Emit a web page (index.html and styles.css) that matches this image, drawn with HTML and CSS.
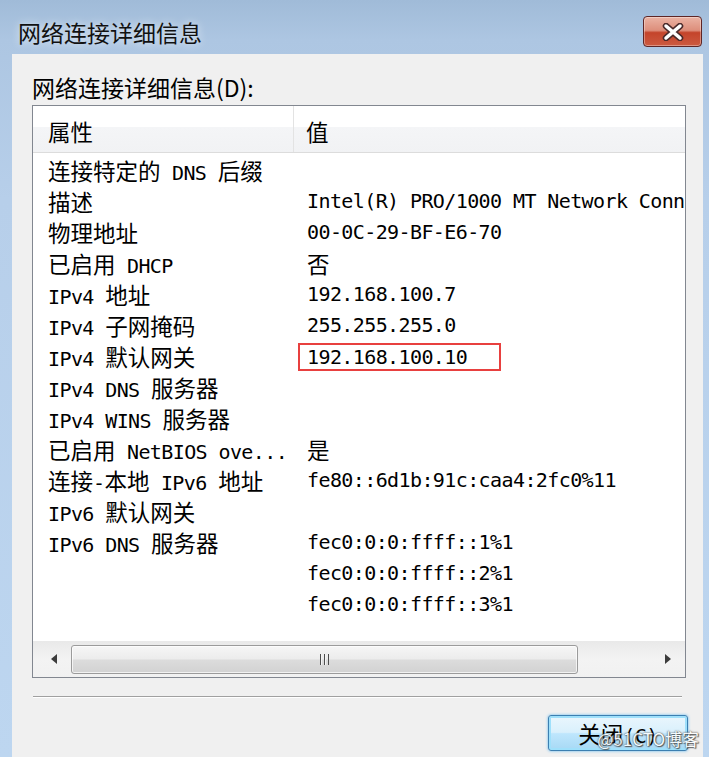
FILE: index.html
```html
<!DOCTYPE html>
<html lang="zh-CN">
<head>
    <meta charset="UTF-8">
    <meta name="viewport" content="width=device-width, initial-scale=1.0">
    <title>网络连接详细信息</title>
    <link rel="stylesheet" href="styles.css">
</head>
<body>
    <div class="window">
        <div class="titlebar">
            <span class="title">网络连接详细信息</span>
            <button class="close-btn" aria-label="关闭">
                <svg width="26" height="18" viewBox="0 0 26 18">
                    <path d="M6 3 L20 15 M20 3 L6 15" stroke="#4a2a2a" stroke-width="6.5" stroke-linecap="round"/>
                    <path d="M6 3 L20 15 M20 3 L6 15" stroke="#ffffff" stroke-width="3.5" stroke-linecap="round"/>
                </svg>
            </button>
        </div>

        <div class="client">
            <div class="label">网络连接详细信息(D):</div>

            <div class="listview">
                <div class="lv-header">
                    <div class="col-k">属性</div>
                    <div class="col-v">值</div>
                </div>

                <div class="lv-body">
                    <div class="row"><span class="k">连接特定的<span class="m"> DNS </span>后缀</span><span class="v"></span></div>
                    <div class="row"><span class="k">描述</span><span class="v">Intel(R) PRO/1000 MT Network Connection</span></div>
                    <div class="row"><span class="k">物理地址</span><span class="v">00-0C-29-BF-E6-70</span></div>
                    <div class="row"><span class="k">已启用<span class="m"> DHCP</span></span><span class="v"><span class="zh">否</span></span></div>
                    <div class="row"><span class="k"><span class="m">IPv4 </span>地址</span><span class="v">192.168.100.7</span></div>
                    <div class="row"><span class="k"><span class="m">IPv4 </span>子网掩码</span><span class="v">255.255.255.0</span></div>
                    <div class="row"><span class="k"><span class="m">IPv4 </span>默认网关</span><span class="v"><span class="hl">192.168.100.10</span></span></div>
                    <div class="row"><span class="k"><span class="m">IPv4 DNS </span>服务器</span><span class="v"></span></div>
                    <div class="row"><span class="k"><span class="m">IPv4 WINS </span>服务器</span><span class="v"></span></div>
                    <div class="row"><span class="k">已启用<span class="m"> NetBIOS ove...</span></span><span class="v"><span class="zh">是</span></span></div>
                    <div class="row"><span class="k">连接<span class="m">-</span>本地<span class="m"> IPv6 </span>地址</span><span class="v">fe80::6d1b:91c:caa4:2fc0%11</span></div>
                    <div class="row"><span class="k"><span class="m">IPv6 </span>默认网关</span><span class="v"></span></div>
                    <div class="row"><span class="k"><span class="m">IPv6 DNS </span>服务器</span><span class="v">fec0:0:0:ffff::1%1</span></div>
                    <div class="row"><span class="k"></span><span class="v">fec0:0:0:ffff::2%1</span></div>
                    <div class="row"><span class="k"></span><span class="v">fec0:0:0:ffff::3%1</span></div>
                </div>

                <div class="hscroll">
                    <div class="sb-btn"><span class="arrow-left"></span></div>
                    <div class="sb-track">
                        <div class="sb-thumb"><span class="grip"></span></div>
                    </div>
                    <div class="sb-btn"><span class="arrow-right"></span></div>
                </div>
            </div>

            <div class="separator"></div>

            <div class="actions">
                <button class="btn-default">关闭<span class="m">(C)</span></button>
            </div>

            <div class="watermark">@51CTO博客</div>
        </div>
    </div>
</body>
</html>
```

FILE: styles.css
```css
body {
    margin: 0;
    padding: 0;
    overflow: hidden;
    font-family: "Noto Sans CJK SC", sans-serif;
}
.window {
    width: 709px;
    height: 757px;
    background: linear-gradient(180deg, #a0bbd8 0%, #adc6e2 40px, #b7cfea 200px, #bdd6f0 100%);
    display: flex;
    flex-direction: column;
}

/* title bar */
.titlebar {
    height: 54px;
    display: flex;
    align-items: flex-start;
    padding-left: 18px;
    box-sizing: border-box;
}
.title {
    margin-top: 17px;
    font-size: 23px;
    line-height: 30px;
    color: #111;
    text-shadow: 0 0 8px rgba(255, 255, 255, 0.8);
}
.close-btn {
    margin: 16px 7px 0 auto;
    width: 59px;
    height: 31px;
    padding: 0;
    border: 1px solid #5e2626;
    border-radius: 4px;
    background: linear-gradient(180deg, #ebb3a4 0%, #dd8e7b 46%, #c4442b 54%, #cc5a40 100%);
    box-shadow: inset 0 0 0 1px rgba(255, 255, 255, 0.35);
    display: flex;
    align-items: center;
    justify-content: center;
}

/* client area */
.client {
    position: relative;
    flex: 1;
    margin: 0 6px 0 12px;
    padding: 20px 17px 0 20px;
    background-color: #f0f0f0;
}
.label {
    font-size: 23px;
    line-height: 26px;
    color: #000;
}
.m {
    font-family: "DejaVu Sans Mono", monospace;
    font-size: 20px;
    letter-spacing: -0.6px;
}
.zh {
    font-family: "Noto Sans CJK SC", sans-serif;
    font-size: 22.5px;
    letter-spacing: 0;
}

/* list view */
.listview {
    margin-top: 5px;
    border: 1px solid #828790;
    background-color: #ffffff;
}
.lv-header {
    height: 46px;
    display: flex;
    border-bottom: 1px solid #dcdcdc;
    background: linear-gradient(180deg, #ffffff 0%, #ffffff 45%, #f4f5f7 46%, #f1f2f4 100%);
    font-size: 22.5px;
    line-height: 46px;
    color: #000;
}
.col-k {
    width: 261px;
    box-sizing: border-box;
    padding: 2px 0 0 15px;
    border-right: 1px solid #e3e3e3;
}
.col-v {
    padding: 2px 0 0 12px;
}
.lv-body {
    height: 488px;
    box-sizing: border-box;
    padding-top: 2px;
    overflow: hidden;
}
.row {
    display: flex;
    height: 31px;
    line-height: 31px;
    white-space: nowrap;
    color: #000;
}
.k {
    flex: none;
    width: 261px;
    box-sizing: border-box;
    padding-left: 15px;
    font-size: 22.5px;
}
.v {
    padding-left: 13px;
    font-family: "DejaVu Sans Mono", monospace;
    font-size: 20px;
    letter-spacing: -0.6px;
}
.hl {
    display: inline-block;
    vertical-align: top;
    width: 203px;
    height: 28px;
    box-sizing: border-box;
    margin: 2px 0 0 -9px;
    padding-left: 7px;
    border: 2px solid #e8403f;
    line-height: 24px;
}

/* horizontal scroll bar */
.hscroll {
    height: 36px;
    display: flex;
    align-items: center;
    background: linear-gradient(180deg, #e9e9e9 0%, #f3f3f3 50%, #f1f1f1 100%);
}
.sb-btn {
    width: 38px;
    height: 100%;
    display: flex;
    align-items: center;
    justify-content: center;
}
.arrow-left {
    width: 0;
    height: 0;
    border-top: 5px solid transparent;
    border-bottom: 5px solid transparent;
    border-right: 6px solid #3c3c3c;
    margin-left: 4px;
}
.arrow-right {
    width: 0;
    height: 0;
    border-top: 5px solid transparent;
    border-bottom: 5px solid transparent;
    border-left: 6px solid #3c3c3c;
    margin-left: 4px;
}
.sb-track {
    flex: 1;
    height: 100%;
    display: flex;
    align-items: center;
}
.sb-thumb {
    width: 507px;
    height: 29px;
    box-sizing: border-box;
    border: 1px solid #9b9b9b;
    border-radius: 3px;
    background: linear-gradient(180deg, #f6f6f6 0%, #ececec 48%, #dcdcdc 52%, #d2d2d2 100%);
    box-shadow: inset 0 0 0 1px rgba(255, 255, 255, 0.7);
    display: flex;
    align-items: center;
    justify-content: center;
}
.grip {
    width: 9px;
    height: 11px;
    background: repeating-linear-gradient(90deg, #4e4e4e 0, #4e4e4e 1px, #f4f4f4 1px, #f4f4f4 2px, transparent 2px, transparent 4px);
}

.separator {
    margin: 18px 4px 0 1px;
    border-top: 1px solid #a0a0a0;
    border-bottom: 1px solid #ffffff;
}

/* buttons */
.actions {
    display: flex;
    justify-content: flex-end;
    margin: 17px -2px 0 0;
}
.btn-default {
    width: 140px;
    height: 36px;
    padding: 0;
    border: 1px solid #3c7fb1;
    border-radius: 3px;
    background: linear-gradient(180deg, #eaf6fd 0%, #d9f0fc 48%, #bee6fd 52%, #a7d9f5 100%);
    box-shadow: inset 0 0 0 2px #9fe0fb, 0 0 3px #5fb8ef;
    font-family: "Noto Sans CJK SC", sans-serif;
    font-size: 22.5px;
    line-height: 34px;
    color: #000;
}

.watermark {
    position: absolute;
    right: 4px;
    bottom: 8px;
    font-size: 17px;
    line-height: 20px;
    color: #ffffff;
    text-shadow: 0 0 1px #444, 0 0 2px #555, 1px 1px 1px #444;
    opacity: 0.85;
}
```
